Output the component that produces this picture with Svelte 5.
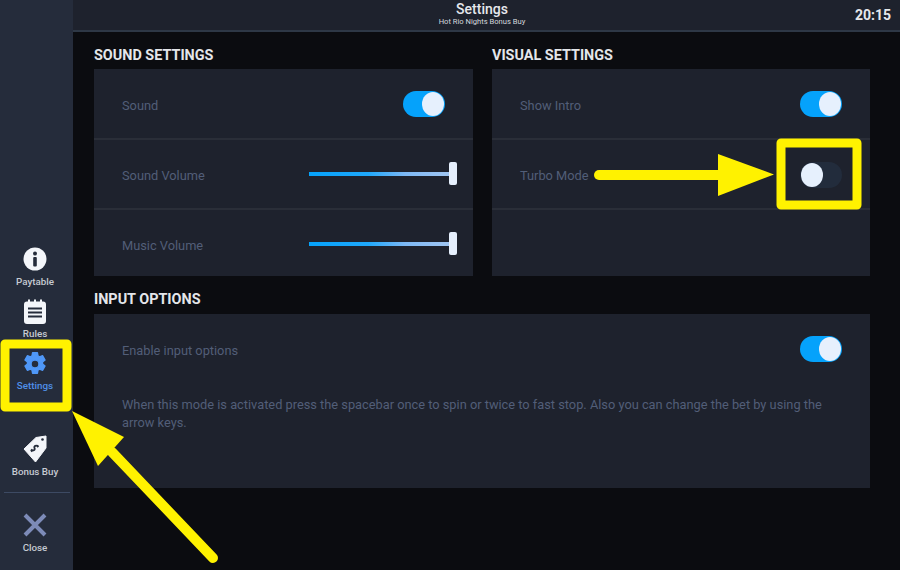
<script>
  const soundRows = [
    { label: "Sound", type: "toggle", on: true },
    { label: "Sound Volume", type: "slider" },
    { label: "Music Volume", type: "slider" }
  ];
  const visualRows = [
    { label: "Show Intro", type: "toggle", on: true },
    { label: "Turbo Mode", type: "toggle", on: false },
    { label: "", type: "" }
  ];
</script>

{#snippet row(r)}
  <div class="row">
    <span class="label">{r.label}</span>
    {#if r.type === "toggle"}
      <span class="toggle" class:on={r.on}><span class="knob"></span></span>
    {:else if r.type === "slider"}
      <span class="slider"><span class="thumb"></span></span>
    {/if}
  </div>
{/snippet}

<div class="screen">
  <nav class="sidebar">
    <div class="item pay">
      <svg width="24" height="24" viewBox="0 0 24 24">
        <circle cx="12" cy="12" r="11.5" fill="#f4f6fa" />
        <circle cx="12" cy="6.6" r="2" fill="#252c3b" />
        <rect x="10.2" y="10" width="3.6" height="9.5" rx="1" fill="#252c3b" />
      </svg>
      <span>Paytable</span>
    </div>
    <div class="item rules">
      <svg width="24" height="26" viewBox="0 0 24 26">
        <rect x="1" y="2.5" width="22" height="22.5" rx="3" fill="#f4f6fa" />
        <path d="M6 0.5v4M12 0.5v4M18 0.5v4" stroke="#f4f6fa" stroke-width="2" />
        <path d="M5 9.5h14M5 13.5h14M5 17.5h14" stroke="#252c3b" stroke-width="2.2" />
      </svg>
      <span>Rules</span>
    </div>
    <div class="item active">
      <svg width="24" height="26" viewBox="0 0 24 24">
        <path fill="#4f97f7" fill-rule="evenodd" d="M14.4 0.8l.5 3.1 1.7 1 3-1.1 2.4 4.2-2.5 2v2l2.5 2-2.4 4.2-3-1.1-1.700 1-.5 3.100H9.600l-.5-3.100-1.700-1-3 1.100-2.400-4.200 2.500-2v-2l-2.500-2 2.400-4.200 3 1.100 1.700-1 .5-3.100zM12 8a4 4 0 1 0 0 8 4 4 0 0 0 0-8z" stroke="#4f97f7" stroke-linejoin="round" stroke-width="1.500" />
      </svg>
      <span>Settings</span>
    </div>
    <div class="item bonus">
      <svg width="24" height="28" viewBox="0 0 24 28">
        <path fill="#f4f6fa" d="M13 2.500L23 1V13L12.500 27L1 14z" stroke="#f4f6fa" stroke-linejoin="round" />
        <circle cx="19.500" cy="4.500" r="1.300" fill="#252c3b" />
        <path d="M15 11.500c-1.500-1.800-4.500-.5-3.500 1.500s-1.500 3.500-3.500 1.500M15.500 10.500l-1.500 1.500M9.500 15l-1.500 1.500" fill="none" stroke="#252c3b" stroke-width="1.800" />
      </svg>
      <span>Bonus Buy</span>
    </div>
    <div class="sep"></div>
    <div class="item close">
      <svg width="24" height="24" viewBox="0 0 24 24">
        <path d="M2 2l20 20M22 2L2 22" stroke="#7d8bb8" stroke-width="4" />
      </svg>
      <span>Close</span>
    </div>
  </nav>

  <main class="main">
    <header class="topbar">
      <div class="title">Settings</div>
      <div class="subtitle">Hot Rio Nights Bonus Buy</div>
      <div class="clock">20:15</div>
    </header>

    <div class="content">
      <div class="columns">
        <section>
          <h2>SOUND SETTINGS</h2>
          <div class="panel">
            {#each soundRows as r}
              {@render row(r)}
            {/each}
          </div>
        </section>
        <section>
          <h2>VISUAL SETTINGS</h2>
          <div class="panel">
            {#each visualRows as r}
              {@render row(r)}
            {/each}
          </div>
        </section>
      </div>

      <section class="input-section">
        <h2>INPUT OPTIONS</h2>
        <div class="panel input-panel">
          <div class="row">
            <span class="label">Enable input options</span>
            <span class="toggle on"><span class="knob"></span></span>
          </div>
          <p>When this mode is activated press the spacebar once to spin or twice to fast stop. Also you can change the bet by using the arrow keys.</p>
        </div>
      </section>
    </div>
  </main>

  <!-- yellow annotations drawn over the screenshot -->
  <svg class="marks" width="900" height="570" viewBox="0 0 900 570">
    <g fill="none" stroke="#fff200" stroke-width="9" stroke-linejoin="round">
      <rect x="5" y="344" width="62" height="63" />
      <rect x="781" y="143" width="76" height="62" />
    </g>
    <path d="M599 175H720" stroke="#fff200" stroke-width="10" stroke-linecap="round" />
    <path d="M718 154L774 174.500 718 196z" fill="#fff200" />
    <path d="M213 558L112 452" stroke="#fff200" stroke-width="10" stroke-linecap="round" />
    <path d="M72 411L124 437 98 466z" fill="#fff200" />
  </svg>
</div>

<style>
  :global(body) {
    margin: 0;
    background: #0b0c10;
  }
  .screen {
    position: relative;
    display: flex;
    width: 900px;
    height: 570px;
    overflow: hidden;
    font-family: Roboto, "Liberation Sans", sans-serif;
    background: #0b0c10;
  }
  .sidebar {
    flex: 0 0 73px;
    display: flex;
    flex-direction: column;
    justify-content: flex-end;
    align-items: center;
    padding: 0 3px 16px 0;
    box-sizing: border-box;
    background: #252c3b;
  }
  .item {
    width: 100%;
    height: 52px;
    display: flex;
    flex-direction: column;
    align-items: center;
    justify-content: flex-start;
    gap: 3px;
    color: #c6cad2;
    font-size: 9.8px;
    font-weight: 500;
  }
  .item span {
    line-height: 12px;
  }
  .item.pay {
    gap: 5px;
  }
  .item.active {
    color: #4f8fe8;
  }
  .item.bonus {
    margin-top: 32px;
  }
  .sep {
    flex: none;
    width: 66px;
    height: 1px;
    margin: 5px -3px 20px 0;
    background: #3d4a63;
  }
  .item.close {
    height: auto;
    gap: 5px;
  }
  .main {
    flex: 1;
    display: flex;
    flex-direction: column;
  }
  .topbar {
    position: relative;
    height: 30px;
    text-align: center;
    background: #1e222d;
    border-bottom: 2px solid #2e3846;
    color: #e6e8ec;
    padding-right: 9px;
  }
  .title {
    padding-top: 1px;
    font-size: 14px;
    font-weight: 500;
    line-height: 16px;
  }
  .subtitle {
    font-size: 7.6px;
    line-height: 10px;
    color: #d4d7dd;
  }
  .clock {
    position: absolute;
    right: 9px;
    top: 6px;
    font-size: 14px;
    font-weight: 700;
    line-height: 18px;
  }
  .content {
    padding: 0 30px 0 21px;
  }
  .columns {
    display: grid;
    grid-template-columns: 379px 378px;
    gap: 19px;
  }
  h2 {
    margin: 0;
    height: 37px;
    line-height: 47px;
    font-size: 14.4px;
    font-weight: 700;
    color: #e4e6ea;
  }
  .input-section h2 {
    height: 38px;
    line-height: 48px;
  }
  .panel {
    background: #1e222d;
  }
  .row {
    height: 68px;
    display: flex;
    align-items: center;
    justify-content: space-between;
    padding: 0 28px;
    border-bottom: 2px solid #2a2e38;
  }
  .panel .row:first-child {
    height: 69px;
  }
  .panel .row:last-child {
    box-sizing: border-box;
    border-bottom: none;
    height: 66px;
    padding-top: 2px;
  }
  .label {
    margin-top: 3px;
    font-size: 12.8px;
    color: #525e78;
  }
  .toggle {
    position: relative;
    display: block;
    width: 42px;
    height: 26px;
    margin-top: 1px;
    border-radius: 13px;
    background: #222c3c;
  }
  .toggle.on {
    background: #05a2fb;
  }
  .knob {
    position: absolute;
    top: 1px;
    left: 1px;
    width: 22px;
    height: 24px;
    border-radius: 50%;
    background: #e6f0fd;
  }
  .toggle.on .knob {
    left: auto;
    right: 1px;
  }
  .slider {
    position: relative;
    display: block;
    width: 148px;
    height: 4px;
    margin-right: -12px;
    background: linear-gradient(90deg, #05a2fb 0%, #1fa8fb 40%, #7db8f4 65%, #a6c8f2 100%);
  }
  .thumb {
    position: absolute;
    right: 0;
    top: -10px;
    width: 8px;
    height: 23px;
    border-radius: 2px;
    background: #e6f0fd;
  }
  .input-panel {
    height: 174px;
  }
  .input-panel .row,
  .panel.input-panel .row:first-child {
    height: 69px;
    border-bottom: none;
  }
  .input-panel p {
    margin: 0;
    padding: 13px 28px 0;
    font-size: 12.8px;
    line-height: 18px;
    color: #525e78;
  }
  .marks {
    position: absolute;
    left: 0;
    top: 0;
    pointer-events: none;
  }
</style>
